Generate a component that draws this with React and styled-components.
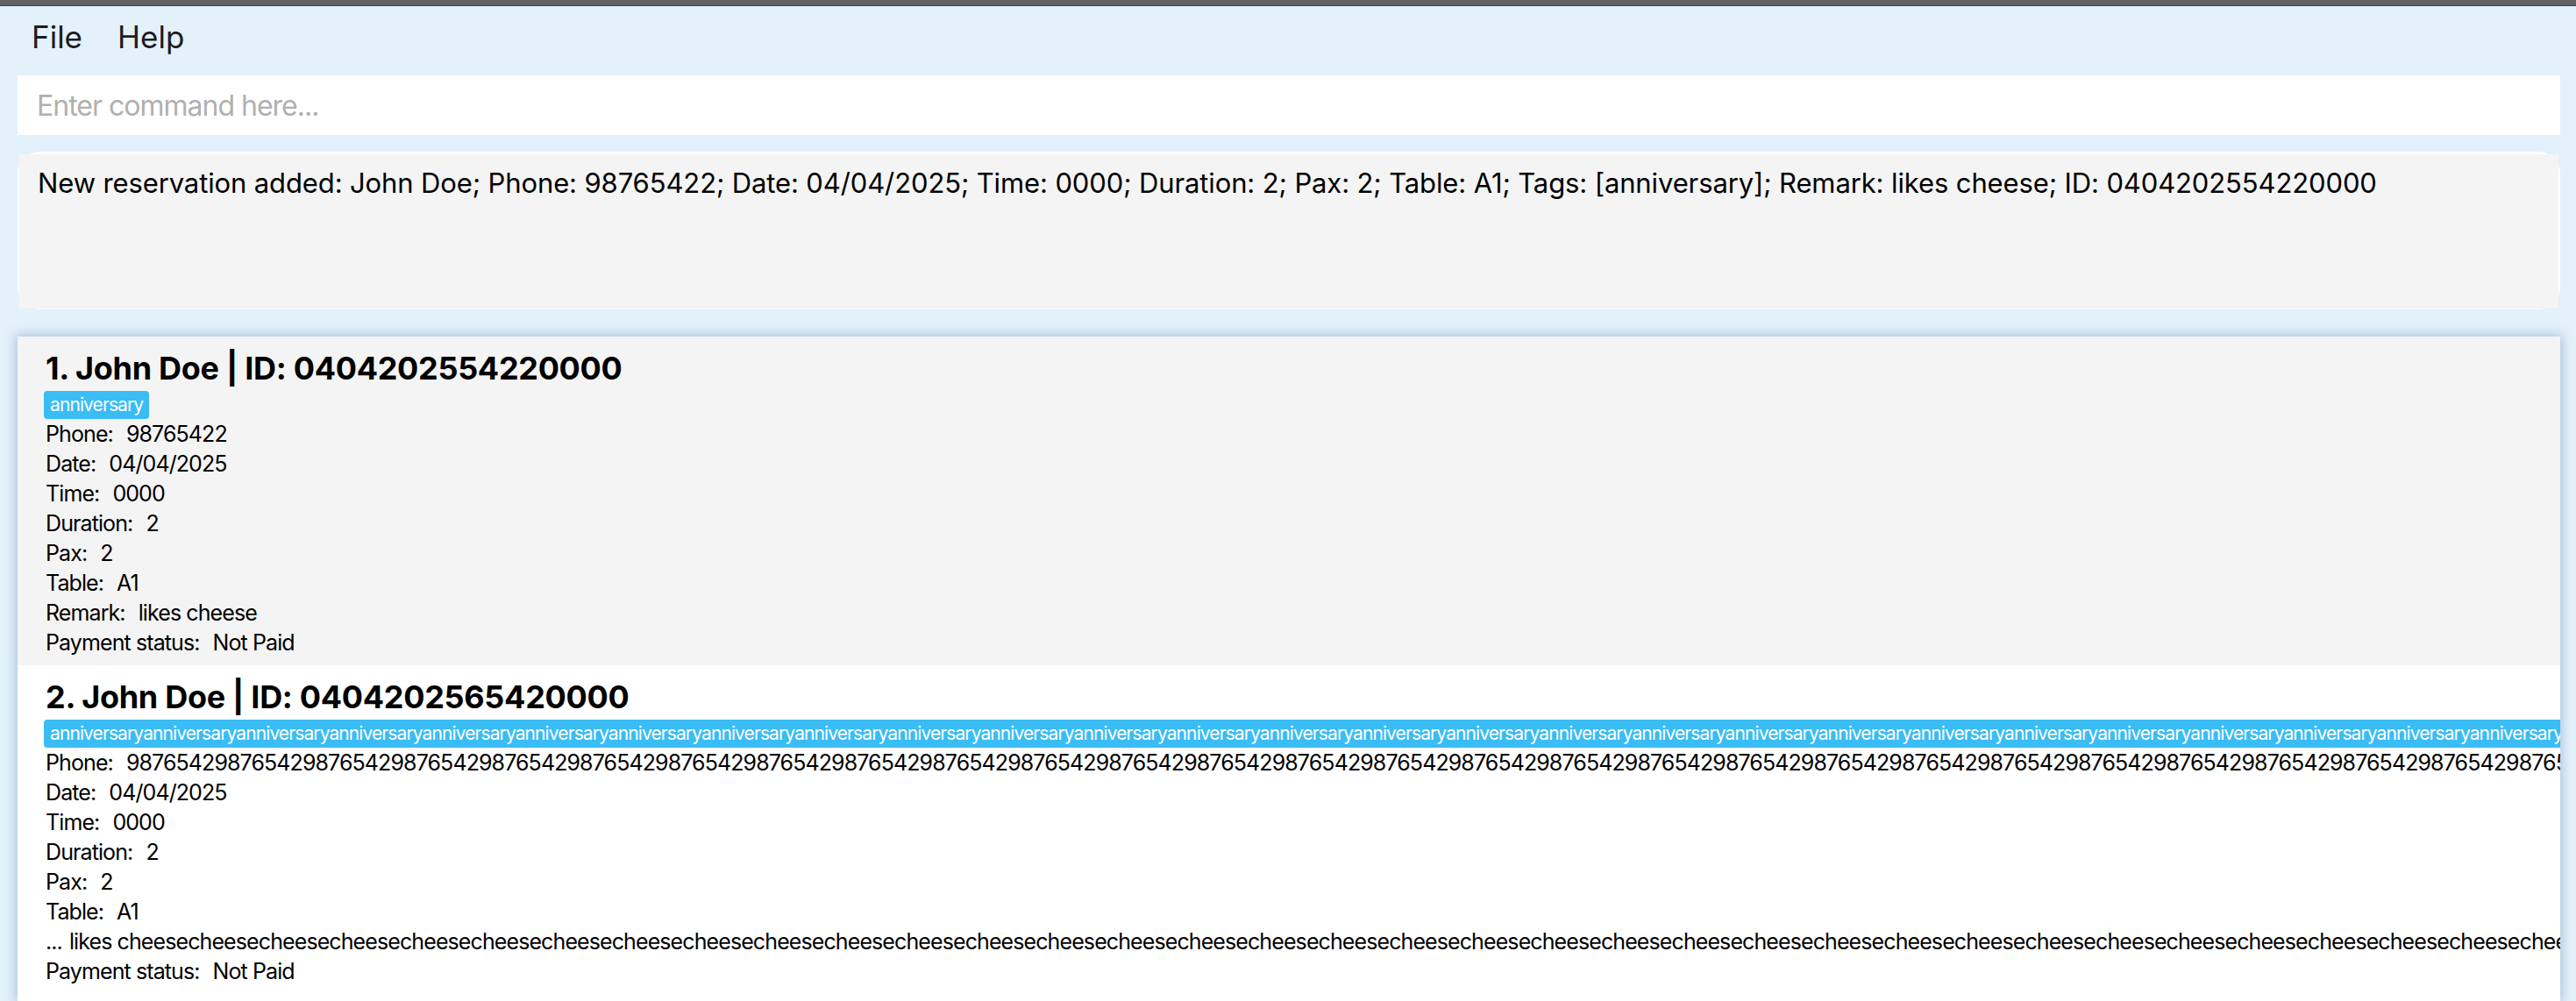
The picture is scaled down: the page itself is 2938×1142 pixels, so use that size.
import React from 'react';
import styled, { createGlobalStyle } from 'styled-components';

const GlobalStyle = createGlobalStyle`
  html, body {
    margin: 0;
    padding: 0;
    height: 100%;
    overflow: hidden;
    background-color: #e3f1fb;
  }
  body {
    font-family: Inter, "Noto Sans", sans-serif;
    color: #000;
  }
`;

const Window = styled.div`
  display: flex;
  flex-direction: column;
  height: 100vh;
  overflow: hidden;
  background-color: #e3f1fb;
`;

const TitleStrip = styled.div`
  flex-shrink: 0;
  height: 6px;
  background-color: #636366;
  border-bottom: 1px solid #3d3d3f;
`;

const MenuBar = styled.div`
  display: flex;
  flex-shrink: 0;
  padding: 11px 0 0 16px;
`;

const MenuItem = styled.div`
  padding: 0 20px;
  font-size: 35px;
  line-height: 48px;
  color: #1c1c1e;
`;

const Content = styled.div`
  display: flex;
  flex-direction: column;
  flex: 1;
  min-height: 0;
  padding: 20px 18px 0 20px;
`;

const CommandInput = styled.input`
  flex-shrink: 0;
  height: 68px;
  box-sizing: border-box;
  border: none;
  outline: none;
  padding: 0 22px;
  background-color: #fff;
  font-family: inherit;
  font-size: 32px;
  letter-spacing: -1px;
  color: #000;

  &::placeholder {
    color: #b0b0b0;
  }
`;

const ResultFrame = styled.div`
  flex-shrink: 0;
  height: 180px;
  box-sizing: border-box;
  margin-top: 19px;
  padding: 3px 2px 1px 2px;
  background-color: #fff;
  border-radius: 25px;
`;

const ResultText = styled.div`
  height: 100%;
  box-sizing: border-box;
  padding: 13px 21px;
  background-color: #f4f4f4;
  font-size: 31px;
  line-height: 40px;
  letter-spacing: -0.12px;
  white-space: nowrap;
  overflow: hidden;
`;

const ListPanel = styled.div`
  flex: 1;
  min-height: 0;
  margin-top: 31px;
  overflow: hidden;
  background-color: #fff;
  box-shadow: 0 0 12px 2px rgba(70, 110, 150, 0.35);
`;

const Card = styled.div`
  padding: 14px 0 9px 32px;
  background-color: ${props => props.$shaded ? '#f4f4f4' : '#fff'};
  white-space: nowrap;
`;

const CardTitle = styled.div`
  font-size: 36px;
  font-weight: 700;
  line-height: 44px;
  letter-spacing: -0.3px;
`;

const TagRow = styled.div`
  display: flex;
  margin: 4px 0 0 -2px;
`;

const Tag = styled.span`
  height: 32px;
  padding: 0 7px;
  border-radius: 4px;
  background-color: #3abcf5;
  color: #fff;
  font-size: 21px;
  line-height: 32px;
  letter-spacing: -0.9px;
`;

const Field = styled.div`
  display: flex;
  font-size: 25px;
  line-height: 34px;
  letter-spacing: -0.9px;
`;

const FieldLabel = styled.span`
  flex-shrink: 0;
  margin-right: ${props => props.$ellipsis ? '8px' : '15px'};
`;

const resultMessage =
  'New reservation added: John Doe; Phone: 98765422; Date: 04/04/2025; Time: 0000; ' +
  'Duration: 2; Pax: 2; Table: A1; Tags: [anniversary]; Remark: likes cheese; ID: 0404202554220000';

const reservations = [
  {
    id: '0404202554220000',
    name: 'John Doe',
    tags: ['anniversary'],
    phone: '98765422',
    date: '04/04/2025',
    time: '0000',
    duration: '2',
    pax: '2',
    table: 'A1',
    remark: 'likes cheese',
    remarkCut: false,
    payment: 'Not Paid',
  },
  {
    id: '0404202565420000',
    name: 'John Doe',
    tags: ['anniversary'.repeat(40)],
    phone: '9876542'.repeat(40),
    date: '04/04/2025',
    time: '0000',
    duration: '2',
    pax: '2',
    table: 'A1',
    remark: 'likes cheese' + 'cheese'.repeat(50),
    remarkCut: true,
    payment: 'Not Paid',
  },
];

function ReservationCard({ reservation, index }) {
  const r = reservation;
  return (
    <Card $shaded={index % 2 === 0}>
      <CardTitle>{index + 1}. {r.name} | ID: {r.id}</CardTitle>
      <TagRow>
        {r.tags.map(tag => <Tag key={tag}>{tag}</Tag>)}
      </TagRow>
      <Field><FieldLabel>Phone:</FieldLabel><span>{r.phone}</span></Field>
      <Field><FieldLabel>Date:</FieldLabel><span>{r.date}</span></Field>
      <Field><FieldLabel>Time:</FieldLabel><span>{r.time}</span></Field>
      <Field><FieldLabel>Duration:</FieldLabel><span>{r.duration}</span></Field>
      <Field><FieldLabel>Pax:</FieldLabel><span>{r.pax}</span></Field>
      <Field><FieldLabel>Table:</FieldLabel><span>{r.table}</span></Field>
      <Field>
        <FieldLabel $ellipsis={r.remarkCut}>{r.remarkCut ? '...' : 'Remark:'}</FieldLabel>
        <span>{r.remark}</span>
      </Field>
      <Field><FieldLabel>Payment status:</FieldLabel><span>{r.payment}</span></Field>
    </Card>
  );
}

export default function App() {
  return (
    <Window>
      <GlobalStyle />
      <TitleStrip />
      <MenuBar>
        <MenuItem>File</MenuItem>
        <MenuItem>Help</MenuItem>
      </MenuBar>
      <Content>
        <CommandInput placeholder="Enter command here..." />
        <ResultFrame>
          <ResultText>{resultMessage}</ResultText>
        </ResultFrame>
        <ListPanel>
          {reservations.map((r, i) => (
            <ReservationCard key={r.id} reservation={r} index={i} />
          ))}
        </ListPanel>
      </Content>
    </Window>
  );
}
